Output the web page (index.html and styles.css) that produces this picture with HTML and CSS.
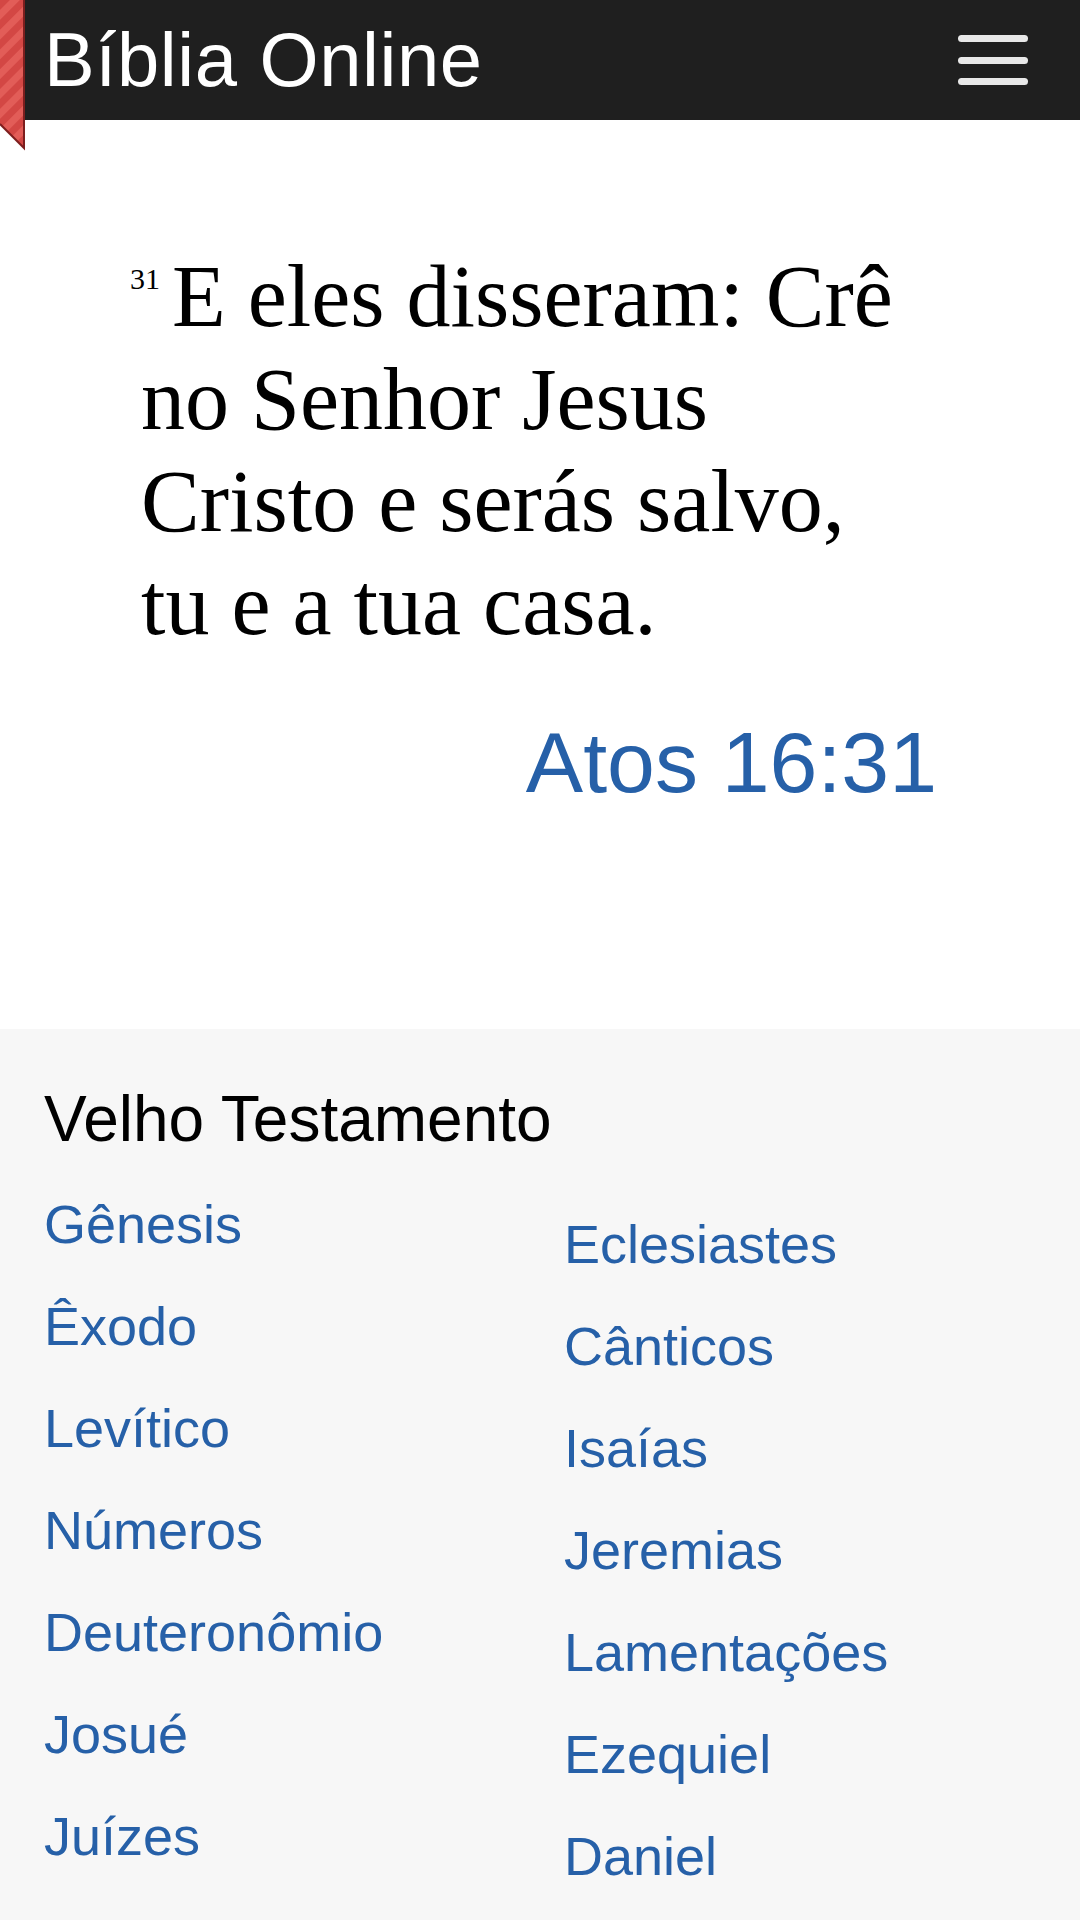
FILE: index.html
```html
<!DOCTYPE html>
<html lang="pt">
<head>
<meta charset="utf-8">
<title>Bíblia Online</title>
<link rel="stylesheet" href="styles.css">
</head>
<body>
<header class="topbar">
  <svg class="ribbon" width="26" height="152" viewBox="0 0 26 152">
    <defs>
      <pattern id="stripes" width="14" height="14" patternUnits="userSpaceOnUse" patternTransform="rotate(45)">
        <rect width="14" height="14" fill="#e25d58"/>
        <rect width="7" height="14" fill="#d34744"/>
      </pattern>
    </defs>
    <polygon points="0,0 24,0 24,148 0,124" fill="url(#stripes)"/>
    <polyline points="24,0 24,148 0,124" fill="none" stroke="#7d1e1e" stroke-width="2"/>
  </svg>
  <a class="brand" href="#">Bíblia Online</a>
  <button class="menu" aria-label="Menu">
    <span class="bar"></span>
    <span class="bar"></span>
    <span class="bar"></span>
  </button>
</header>

<main class="verse-section">
  <p class="verse"><sup class="num">31</sup>E eles disseram: Crê no Senhor Jesus Cristo e serás salvo, tu e a tua casa.</p>
  <a class="ref" href="#">Atos 16:31</a>
</main>

<section class="books">
  <h2 class="books-title">Velho Testamento</h2>
  <div class="book-cols">
    <ul class="col">
      <li><a href="#">Gênesis</a></li>
      <li><a href="#">Êxodo</a></li>
      <li><a href="#">Levítico</a></li>
      <li><a href="#">Números</a></li>
      <li><a href="#">Deuteronômio</a></li>
      <li><a href="#">Josué</a></li>
      <li><a href="#">Juízes</a></li>
      <li><a href="#">Rute</a></li>
      <li><a href="#">1 Samuel</a></li>
      <li><a href="#">2 Samuel</a></li>
    </ul>
    <ul class="col col-right">
      <li><a href="#">Eclesiastes</a></li>
      <li><a href="#">Cânticos</a></li>
      <li><a href="#">Isaías</a></li>
      <li><a href="#">Jeremias</a></li>
      <li><a href="#">Lamentações</a></li>
      <li><a href="#">Ezequiel</a></li>
      <li><a href="#">Daniel</a></li>
      <li><a href="#">Oséias</a></li>
      <li><a href="#">Joel</a></li>
      <li><a href="#">Amós</a></li>
    </ul>
  </div>
</section>
</body>
</html>
```

FILE: styles.css
```css
html, body {
  margin: 0;
  padding: 0;
  background: #ffffff;
}

body {
  font-family: "Liberation Sans", Arial, sans-serif;
  color: #000;
}

.topbar {
  position: relative;
  height: 120px;
  background: #1f1f1f;
  display: flex;
  align-items: center;
  justify-content: space-between;
  padding: 0 52px 0 44px;
}

.ribbon {
  position: absolute;
  left: 0;
  top: 0;
}

.brand {
  color: #ffffff;
  text-decoration: none;
  font-size: 76px;
  line-height: 1.2;
  letter-spacing: 0.6px;
}

.menu {
  width: 70px;
  height: 50px;
  padding: 0;
  border: 0;
  background: transparent;
  display: flex;
  flex-direction: column;
  justify-content: space-between;
}

.bar {
  display: block;
  width: 70px;
  height: 7px;
  border-radius: 4px;
  background: #e8e8e8;
}

.verse-section {
  padding: 126px 143px 0 141px;
  display: flex;
  flex-direction: column;
  margin-bottom: 215px;
}

.verse {
  margin: 0 22px 0 0;
  font-family: "Liberation Serif", "Times New Roman", serif;
  font-size: 88px;
  line-height: 102.5px;
  text-indent: -11px;
  color: #000;
}

.num {
  font-size: 30px;
  line-height: 0;
  vertical-align: 37px;
  margin-right: 12px;
}

.ref {
  align-self: flex-end;
  margin-top: 55px;
  font-size: 86px;
  line-height: 1.2;
  color: #2660a8;
  text-decoration: none;
}

.books {
  background: #f7f7f7;
  padding: 52px 44px 0 44px;
  min-height: 900px;
}

.books-title {
  margin: 0 0 15px 0;
  font-weight: normal;
  font-size: 64px;
  line-height: 1.2;
}

.book-cols {
  display: grid;
  grid-template-columns: 1fr 1fr;
  column-gap: 48px;
}

.col {
  list-style: none;
  margin: 0;
  padding: 0;
}

.col-right {
  padding-top: 20px;
}

.col li {
  font-size: 54px;
  line-height: 102px;
}

.col a {
  color: #2660a8;
  text-decoration: none;
}
```
